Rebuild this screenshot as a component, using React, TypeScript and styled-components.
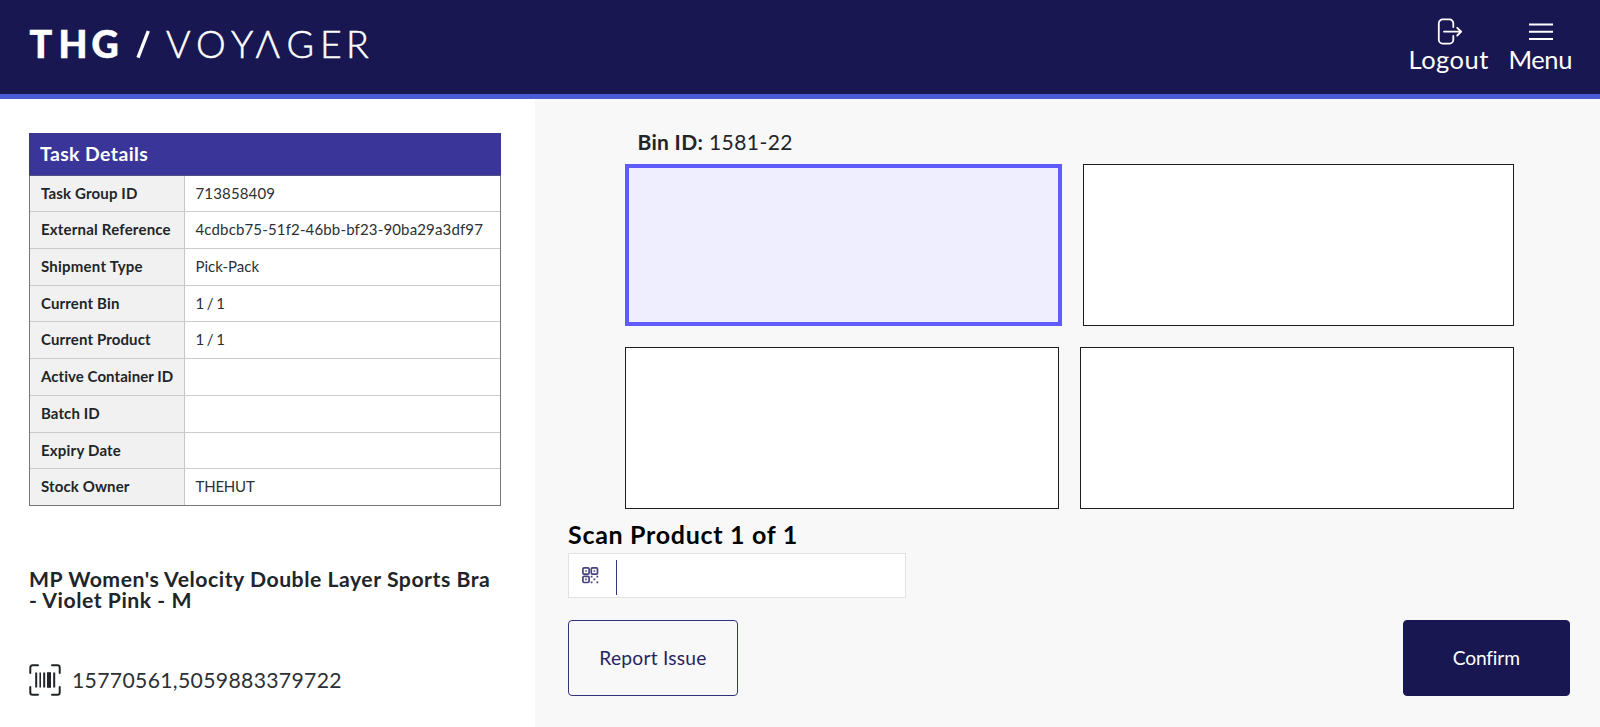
import React from "react";
import styled, { createGlobalStyle } from "styled-components";

const GlobalStyle = createGlobalStyle`
  *, *::before, *::after { box-sizing: border-box; }
  body {
    margin: 0;
    font-family: Lato, "Noto Sans", sans-serif;
    color: #212529;
    background: #fff;
  }
`;

const Page = styled.div`
  display: flex;
  flex-direction: column;
  height: 727px;
  overflow: hidden;
`;

const Header = styled.header`
  display: flex;
  justify-content: space-between;
  height: 99px;
  flex: none;
  padding: 18px 28px 0 28px;
  background: #191751;
  border-bottom: 5px solid #4b5bd7;
`;

const Logo = styled.svg`
  display: block;
  margin-top: 4px;
  fill: #fff;
  font-family: Lato, sans-serif;
`;

const HeaderActions = styled.nav`
  display: flex;
  gap: 19.5px;
`;

const HeaderAction = styled.button<{ $tracking: string }>`
  display: flex;
  flex-direction: column;
  align-items: center;
  padding: 0;
  border: 0;
  background: none;
  color: #fff;
  font: 400 25.5px/30px Lato, sans-serif;
  letter-spacing: ${(p) => p.$tracking};

  svg { display: block; margin: 0 0 -2px 3px; }
`;

const Body = styled.div`
  display: flex;
  flex: 1;
`;

const Sidebar = styled.aside`
  width: 535px;
  flex: none;
  padding: 34px 34px 0 29px;
  background: #fff;
`;

const TaskTable = styled.section`
  width: 472px;
  height: 372.5px;
  border: 1px solid #77777a;
  border-top: 0;
`;

const TableTitle = styled.h2`
  height: 43px;
  margin: 0 -1px;
  padding-left: 11px;
  background: #3a3699;
  border-bottom: 1px solid #55527f;
  color: #fff;
  font-size: 19.4px;
  font-weight: 700;
  line-height: 41px;
  letter-spacing: 0.42px;
`;

const TableRow = styled.div`
  display: flex;
  height: 36.7px;
  line-height: 34px;

  &:nth-of-type(1) { height: 35.4px; }
  & + & { border-top: 1px solid #cbcbcb; }
`;

const Label = styled.div<{ $tracking: number }>`
  width: 155px;
  padding-left: 11px;
  background: #f1f1f1;
  border-right: 1px solid #c6c6c6;
  font-size: 15px;
  font-weight: 700;
  letter-spacing: ${(p) => p.$tracking}px;
  white-space: nowrap;
`;

const Value = styled.div<{ $tracking: number }>`
  padding-left: 10.5px;
  color: #2c3034;
  font-size: 15px;
  letter-spacing: ${(p) => p.$tracking}px;
  white-space: nowrap;
`;

const ProductName = styled.h3`
  width: 472px;
  margin: 63px 0 0;
  font-size: 21.2px;
  font-weight: 700;
  line-height: 21.5px;
  letter-spacing: 0.53px;
  white-space: nowrap;
`;

const Barcode = styled.div`
  display: flex;
  align-items: center;
  gap: 11px;
  margin-top: 52px;
  color: #2c3034;
  font-size: 21.2px;
  line-height: 32px;
  letter-spacing: 0.32px;

  svg { display: block; }
`;

const Main = styled.main`
  flex: 1;
  padding: 31px 30px 0 33px;
  background: #f8f8f8;
`;

const BinArea = styled.section`
  width: 889px;
  margin-left: 57px;
`;

const BinLabel = styled.div`
  height: 34px;
  padding-left: 12.5px;
  font-size: 21px;
  line-height: 23px;
  letter-spacing: 0.45px;

  b { letter-spacing: 0.3px; }
`;

const BinRow = styled.div`
  display: flex;
  gap: 20.5px;
  height: 162px;

  & + & { margin-top: 21px; }
`;

const Bin = styled.div<{ $active?: boolean }>`
  box-sizing: content-box;
  flex: 1 1 0;
  background: ${(p) => (p.$active ? "#efeeff" : "#fff")};
  border: ${(p) => (p.$active ? "4px solid #605bfb" : "1px solid #1d1d1f")};
`;

const ScanTitle = styled.h1`
  margin: 10px 0 4px;
  color: #000;
  font-size: 25px;
  font-weight: 700;
  line-height: 30px;
  letter-spacing: 0.7px;
`;

const ScanField = styled.label`
  display: flex;
  align-items: center;
  width: 338px;
  height: 45px;
  padding: 0 6px 0 12.5px;
  background: #fff;
  border: 1px solid #dfe3e6;
`;

const Divider = styled.span`
  width: 1px;
  height: 35px;
  margin: 3px 0 0 17px;
  background: #35327c;
`;

const ScanInput = styled.input`
  flex: 1;
  min-width: 0;
  height: 35px;
  border: 0;
  outline: 0;
  background: none;
  font: 400 19px Lato, sans-serif;
`;

const Actions = styled.div`
  display: flex;
  justify-content: space-between;
  margin-top: 22px;
`;

const ActionButton = styled.button<{ $primary?: boolean }>`
  width: ${(p) => (p.$primary ? 167.5 : 170)}px;
  height: 76px;
  padding: 0 0 2px;
  border: 1px solid ${(p) => (p.$primary ? "#191751" : "#35327c")};
  border-radius: 4px;
  background: ${(p) => (p.$primary ? "#191751" : "transparent")};
  color: ${(p) => (p.$primary ? "#fff" : "#272464")};
  font: 400 19.2px Lato, sans-serif;
  letter-spacing: ${(p) => (p.$primary ? "-0.15px" : "0.24px")};
`;

const wordmark: { weight: number; size: number; glyphs: string; x: string; outline: number }[] = [
  { weight: 900, size: 37.5, glyphs: "THG", x: "1.6 30.6 63.6", outline: 0.6 },
  { weight: 300, size: 37.5, glyphs: "VOYΛGER", x: "138 168 203 227.5 258.4 292 318", outline: 0.5 },
];

const VoyagerLogo = () => (
  <Logo width="345" height="44" role="img" aria-label="THG / VOYAGER">
    {wordmark.map((w) => (
      <text
        key={w.glyphs}
        x={w.x}
        y="35.6"
        fontSize={w.size}
        fontWeight={w.weight}
        stroke="#fff"
        strokeWidth={w.outline}
      >
        {w.glyphs}
      </text>
    ))}
    <path d="M110 35.6 120.3 9" stroke="#fff" strokeWidth="3.4" />
  </Logo>
);

const LogoutIcon = () => (
  <svg width="26" height="28" viewBox="0 0 26 28" fill="none" stroke="#fff" strokeWidth="1.8" strokeLinecap="round" strokeLinejoin="round">
    <path d="M16.3 9V5.2A3.8 3.8 0 0 0 12.5 1.4H5.6A3.8 3.8 0 0 0 1.8 5.2V21.8A3.8 3.8 0 0 0 5.6 25.6H12.5A3.8 3.8 0 0 0 16.3 21.8V18" />
    <path d="M7 13.6H24M20.2 9.8 24.2 13.6 20.2 17.5" />
  </svg>
);

const MenuIcon = () => (
  <svg width="26" height="28" viewBox="0 0 26 28" stroke="#fff" strokeWidth="2">
    <path d="M0 6.5H24M0 13.7H24M0 20.9H24" />
  </svg>
);

const BarcodeIcon = () => (
  <svg width="32" height="32" viewBox="0 0 32 32" fill="none" stroke="#212529" strokeWidth="2" strokeLinecap="round">
    <path d="M1.3 9V3.5A2.2 2.2 0 0 1 3.5 1.3H9M23 1.3H28.5A2.2 2.2 0 0 1 30.7 3.5V9M30.7 23V28.5A2.2 2.2 0 0 1 28.5 30.7H23M9 30.7H3.5A2.2 2.2 0 0 1 1.3 28.5V23" />
    <g strokeLinecap="butt">
      <path d="M7.2 8.5V23.5M15.2 8.5V23.5M25.2 8.5V23.5" strokeWidth="2" />
      <path d="M11.2 8.5V23.5" strokeWidth="1.6" />
      <path d="M20 8.2V23.8" strokeWidth="4" />
    </g>
  </svg>
);

const QrIcon = () => (
  <svg width="17" height="17" viewBox="0 0 17 17" fill="none" stroke="#46437f" strokeWidth="1.7">
    <rect x="0.9" y="0.9" width="6.2" height="6.2" rx="1.2" />
    <rect x="9.3" y="0.9" width="6.2" height="6.2" rx="1.2" />
    <rect x="0.9" y="9.3" width="6.2" height="6.2" rx="1.2" />
    <path fill="#46437f" stroke="none" d="M3.2 3.2h1.6v1.6h-1.6zM11.6 3.2h1.6v1.6h-1.6zM3.2 11.6h1.6v1.6h-1.6zM8.7 8.7h1.8v1.8h-1.8zM14.4 8.7h1.8v1.8h-1.8zM11.5 11.5h1.8v1.8h-1.8zM8.7 14.4h1.8v1.8h-1.8zM14.4 14.4h1.8v1.8h-1.8z" />
  </svg>
);

const rows: { label: string; lt: number; value: string; vt?: number }[] = [
  { label: "Task Group ID", lt: 0.16, value: "713858409", vt: 0.15 },
  { label: "External Reference", lt: 0.2, value: "4cdbcb75-51f2-46bb-bf23-90ba29a3df97", vt: 0.15 },
  { label: "Shipment Type", lt: 0.23, value: "Pick-Pack", vt: 0 },
  { label: "Current Bin", lt: 0.15, value: "1 / 1", vt: -0.6 },
  { label: "Current Product", lt: 0.13, value: "1 / 1", vt: -0.6 },
  { label: "Active Container ID", lt: 0.06, value: "" },
  { label: "Batch ID", lt: 0.1, value: "" },
  { label: "Expiry Date", lt: 0.2, value: "" },
  { label: "Stock Owner", lt: 0.13, value: "THEHUT", vt: -0.2 },
];

export default function App() {
  return (
    <Page>
      <GlobalStyle />
      <Header>
        <VoyagerLogo />
        <HeaderActions>
          <HeaderAction $tracking="0.5px">
            <LogoutIcon />
            Logout
          </HeaderAction>
          <HeaderAction $tracking="-0.4px">
            <MenuIcon />
            Menu
          </HeaderAction>
        </HeaderActions>
      </Header>
      <Body>
        <Sidebar>
          <TaskTable>
            <TableTitle>Task Details</TableTitle>
            {rows.map((r) => (
              <TableRow key={r.label}>
                <Label $tracking={r.lt}>{r.label}</Label>
                <Value $tracking={r.vt ?? 0}>{r.value}</Value>
              </TableRow>
            ))}
          </TaskTable>
          <ProductName>
            MP Women's Velocity Double Layer Sports Bra
            <br />- Violet Pink - M
          </ProductName>
          <Barcode>
            <BarcodeIcon />
            15770561,5059883379722
          </Barcode>
        </Sidebar>
        <Main>
          <BinArea>
            <BinLabel>
              <b>Bin ID:</b> 1581-22
            </BinLabel>
            <BinRow>
              <Bin $active />
              <Bin />
            </BinRow>
            <BinRow>
              <Bin />
              <Bin />
            </BinRow>
          </BinArea>
          <ScanTitle>Scan Product 1 of 1</ScanTitle>
          <ScanField>
            <QrIcon />
            <Divider />
            <ScanInput aria-label="Scan product" />
          </ScanField>
          <Actions>
            <ActionButton>Report Issue</ActionButton>
            <ActionButton $primary>Confirm</ActionButton>
          </Actions>
        </Main>
      </Body>
    </Page>
  );
}
